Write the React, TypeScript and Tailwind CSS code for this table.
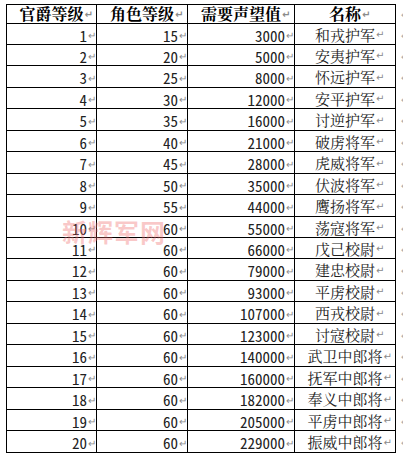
import React from "react";

const rows: [number, number, number, string][] = [
  [1, 15, 3000, "和戎护军"],
  [2, 20, 5000, "安夷护军"],
  [3, 25, 8000, "怀远护军"],
  [4, 30, 12000, "安平护军"],
  [5, 35, 16000, "讨逆护军"],
  [6, 40, 21000, "破虏将军"],
  [7, 45, 28000, "虎威将军"],
  [8, 50, 35000, "伏波将军"],
  [9, 55, 44000, "鹰扬将军"],
  [10, 60, 55000, "荡寇将军"],
  [11, 60, 66000, "戊己校尉"],
  [12, 60, 79000, "建忠校尉"],
  [13, 60, 93000, "平虏校尉"],
  [14, 60, 107000, "西戎校尉"],
  [15, 60, 123000, "讨寇校尉"],
  [16, 60, 140000, "武卫中郎将"],
  [17, 60, 160000, "抚军中郎将"],
  [18, 60, 182000, "奉义中郎将"],
  [19, 60, 205000, "平虏中郎将"],
  [20, 60, 229000, "振威中郎将"],
];

const cjk = { fontFamily: '"Noto Serif CJK SC","Noto Sans CJK SC",serif' };
const num = { fontFamily: '"Noto Sans Mono CJK SC","Liberation Mono",monospace' };

function Mark() {
  return (
    <span className="relative inline-block w-0">
      <span className="absolute left-[1px] top-[-4px] text-[10px] leading-none text-[#8a8a8a]" style={{ fontFamily: '"DejaVu Sans",sans-serif' }}>
        ↵
      </span>
    </span>
  );
}

function NumCell({ v, w }: { v: number; w: string }) {
  return (
    <div className={`${w} flex items-center justify-end pr-[9px] pt-[2px] border-r border-black text-[15px] leading-none font-light text-[#222]`} style={num}>
      <span>{v}</span>
      <Mark />
    </div>
  );
}

export default function App() {
  return (
    <div className="w-[403px] h-[458px] overflow-hidden bg-white">
      <div className="relative pt-[4px] pl-[6px]">
        <div className="flex h-[20px]">
          <div className="flex border-t border-l border-b border-black">
            {["官爵等级", "角色等级", "需要声望值", "名称"].map((h, i) => (
              <div
                key={h}
                className={`${i === 0 ? "w-[90px]" : i === 1 ? "w-[91px]" : i === 2 ? "w-[107px]" : "w-[101px]"} flex items-center justify-center border-r border-black text-[16px] font-bold leading-none text-black`}
                style={cjk}
              >
                <span>{h}</span>
                <Mark />
              </div>
            ))}
          </div>
          <span className="ml-[5px] mt-[6px] text-[9px] leading-none text-[#aaa]">↵</span>
        </div>
        {rows.map((r, i) => {
          const h = Math.floor((i + 1) * 21.45) - Math.floor(i * 21.45);
          return (
            <div key={r[0]} className={`flex ${h === 22 ? "h-[22px]" : "h-[21px]"}`}>
              <div className="flex border-l border-b border-black">
                <NumCell v={r[0]} w="w-[90px]" />
                <NumCell v={r[1]} w="w-[91px]" />
                <NumCell v={r[2]} w="w-[107px]" />
                <div className="w-[101px] flex items-center justify-center border-r border-black text-[15px] leading-none text-[#222]" style={cjk}>
                  <span>{r[3]}</span>
                  <Mark />
                </div>
              </div>
              <span className="ml-[5px] mt-[7px] text-[9px] leading-none text-[#aaa]">↵</span>
            </div>
          );
        })}
        <div
          className="absolute left-[62px] top-[219px] text-[25px] font-bold leading-none tracking-[1px] text-[rgba(240,110,110,0.38)]"
          style={{ fontFamily: '"Noto Sans CJK SC",sans-serif' }}
        >
          新辉军网
        </div>
      </div>
    </div>
  );
}
